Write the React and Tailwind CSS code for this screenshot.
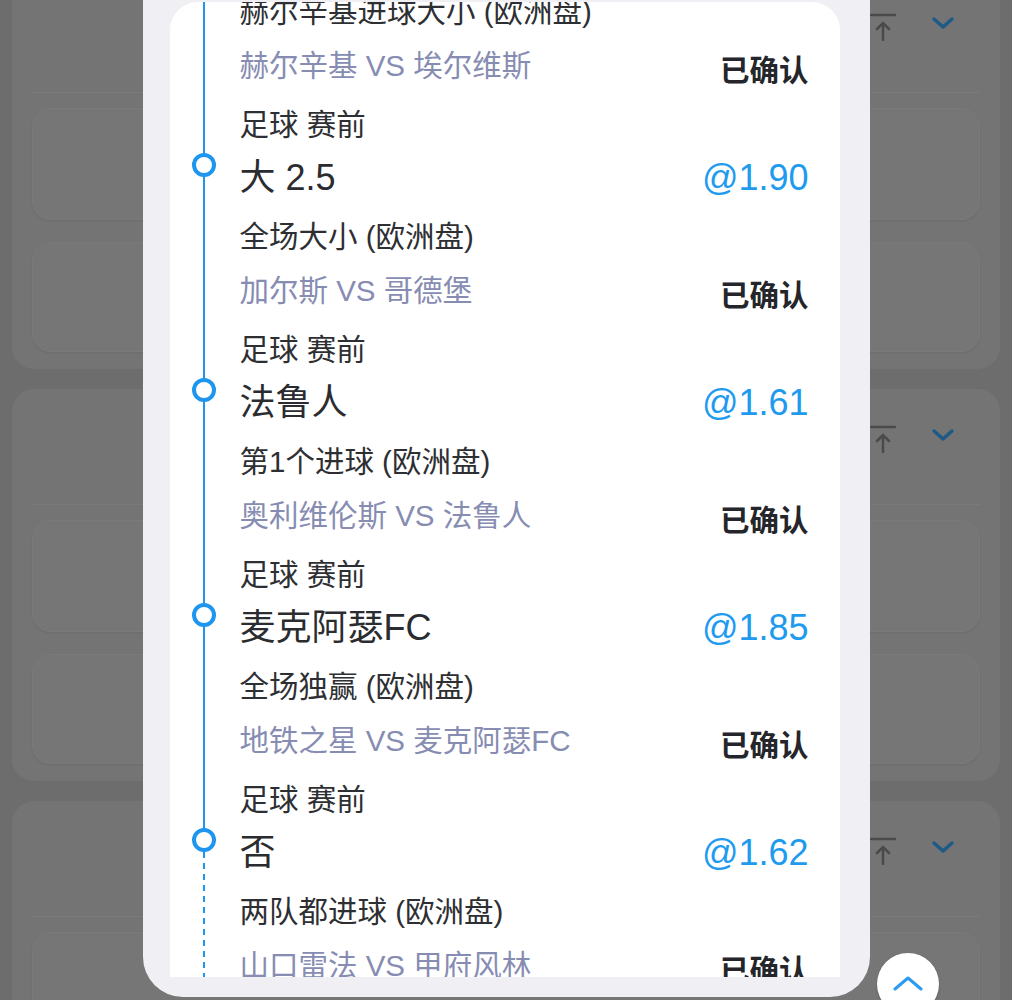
import React from 'react';

const bets = [
    { sport: '足球 赛前', pick: '大 2.5', odds: '@1.90', market: '全场大小 (欧洲盘)', teams: '加尔斯 VS 哥德堡' },
    { sport: '足球 赛前', pick: '法鲁人', odds: '@1.61', market: '第1个进球 (欧洲盘)', teams: '奥利维伦斯 VS 法鲁人' },
    { sport: '足球 赛前', pick: '麦克阿瑟FC', odds: '@1.85', market: '全场独赢 (欧洲盘)', teams: '地铁之星 VS 麦克阿瑟FC' },
    { sport: '足球 赛前', pick: '否', odds: '@1.62', market: '两队都进球 (欧洲盘)', teams: '山口雷法 VS 甲府风林' },
];

function PinIcon() {
    return (
        <svg width="26" height="28" viewBox="0 0 26 28" fill="none" stroke="#4a4a4c" strokeWidth="2.5" strokeLinecap="round">
            <line x1="1" y1="2" x2="25" y2="2" />
            <path d="M13 27V10M7 16l6-6 6 6" />
        </svg>
    );
}

function ChevronDown() {
    return (
        <svg width="24" height="14" viewBox="0 0 24 14" fill="none" stroke="#1d5a86" strokeWidth="3.5" strokeLinecap="round" strokeLinejoin="round">
            <path d="M3 3l9 8 9-8" />
        </svg>
    );
}

function BgGroup() {
    return (
        <div className="h-[392px] shrink-0 rounded-[22px] bg-[#747474] px-5">
            <div className="h-[116px] border-b border-[#7a7a7a] flex justify-end items-start pt-[36px] gap-[35px] pr-[25px]">
                <PinIcon />
                <div className="mt-[3px]"><ChevronDown /></div>
            </div>
            <div className="flex flex-col gap-[22px] pt-[15px]">
                <div className="h-[112px] rounded-[18px] bg-[#767676] border border-[#7a7a7a] shadow-[0_1px_2px_rgba(0,0,0,0.08)]" />
                <div className="h-[110px] rounded-[18px] bg-[#767676] border border-[#7a7a7a] shadow-[0_1px_2px_rgba(0,0,0,0.08)]" />
            </div>
        </div>
    );
}

function Dot() {
    return <span className="absolute left-[22px] top-[59px] w-[24px] h-[24px] rounded-full border-[4px] border-[#1e95ee] bg-white" />;
}

function TeamsRow({ teams }) {
    return (
        <div className="h-[56px] flex items-center justify-between pt-[1px] text-[29.5px]">
            <span className="text-[#878cb2]">{teams}</span>
            <span className="pt-[9px] font-bold text-[#25262b]">已确认</span>
        </div>
    );
}

function BetItem({ bet, last }) {
    return (
        <div className="relative pl-[70px] pr-[31px]">
            {last ? (
                <>
                    <span className="absolute left-[33px] top-0 h-[71px] w-[2px] bg-[#1e95ee]" />
                    <span className="absolute left-[33px] top-[83px] bottom-0 w-[2px] bg-[repeating-linear-gradient(to_bottom,#1e95ee_0_6px,transparent_6px_11px)]" />
                </>
            ) : (
                <span className="absolute left-[33px] top-0 bottom-0 w-[2px] bg-[#1e95ee]" />
            )}
            <Dot />
            <div className="h-[56px] flex items-center pt-[6px] text-[29.5px] text-[#2e2f33]">{bet.sport}</div>
            <div className="h-[56px] flex items-center justify-between text-[36px]">
                <span className="text-[#2b2c30]">{bet.pick}</span>
                <span className="text-[#1e9bef]">{bet.odds}</span>
            </div>
            <div className="h-[57px] flex items-center pt-[6px] text-[29.5px] text-[#2e2f33]">{bet.market}</div>
            <TeamsRow teams={bet.teams} />
        </div>
    );
}

export default function App() {
    return (
        <div
            className="relative h-[1000px] w-full overflow-hidden bg-[#6d6d6d]"
            style={{ fontFamily: '"Liberation Sans", "Noto Sans CJK SC", sans-serif' }}
        >
            <div className="flex flex-col gap-5 px-3 -mt-[23px]">
                <BgGroup />
                <BgGroup />
                <BgGroup />
            </div>

            <div className="absolute inset-x-0 top-0 flex justify-center">
                <div className="w-[727px] h-[997px] rounded-b-[40px] bg-[#efeff4] pt-[2px] pb-[20px] pl-[27px] pr-[30px]">
                    <div className="h-full overflow-hidden rounded-t-[28px] bg-white">
                        <div className="relative pl-[70px] pr-[31px]">
                            <span className="absolute left-[33px] -top-[21px] bottom-0 w-[2px] bg-[#1e95ee]" />
                            <div className="h-[57px] -mt-[21px] flex items-center pt-[6px] text-[29.5px] text-[#2e2f33]">赫尔辛基进球大小 (欧洲盘)</div>
                            <TeamsRow teams="赫尔辛基 VS 埃尔维斯" />
                        </div>
                        {bets.map((bet, i) => (
                            <BetItem key={i} bet={bet} last={i === bets.length - 1} />
                        ))}
                    </div>
                </div>
            </div>

            <button className="absolute left-[877px] top-[953px] w-[62px] h-[62px] rounded-full bg-white flex justify-center pt-[22px] shadow-[0_1px_3px_rgba(0,0,0,0.15)]">
                <svg width="30" height="16" viewBox="0 0 30 16" fill="none" stroke="#2a9bf0" strokeWidth="3" strokeLinecap="round" strokeLinejoin="round">
                    <path d="M2 14L15 3l13 11" />
                </svg>
            </button>
        </div>
    );
}
